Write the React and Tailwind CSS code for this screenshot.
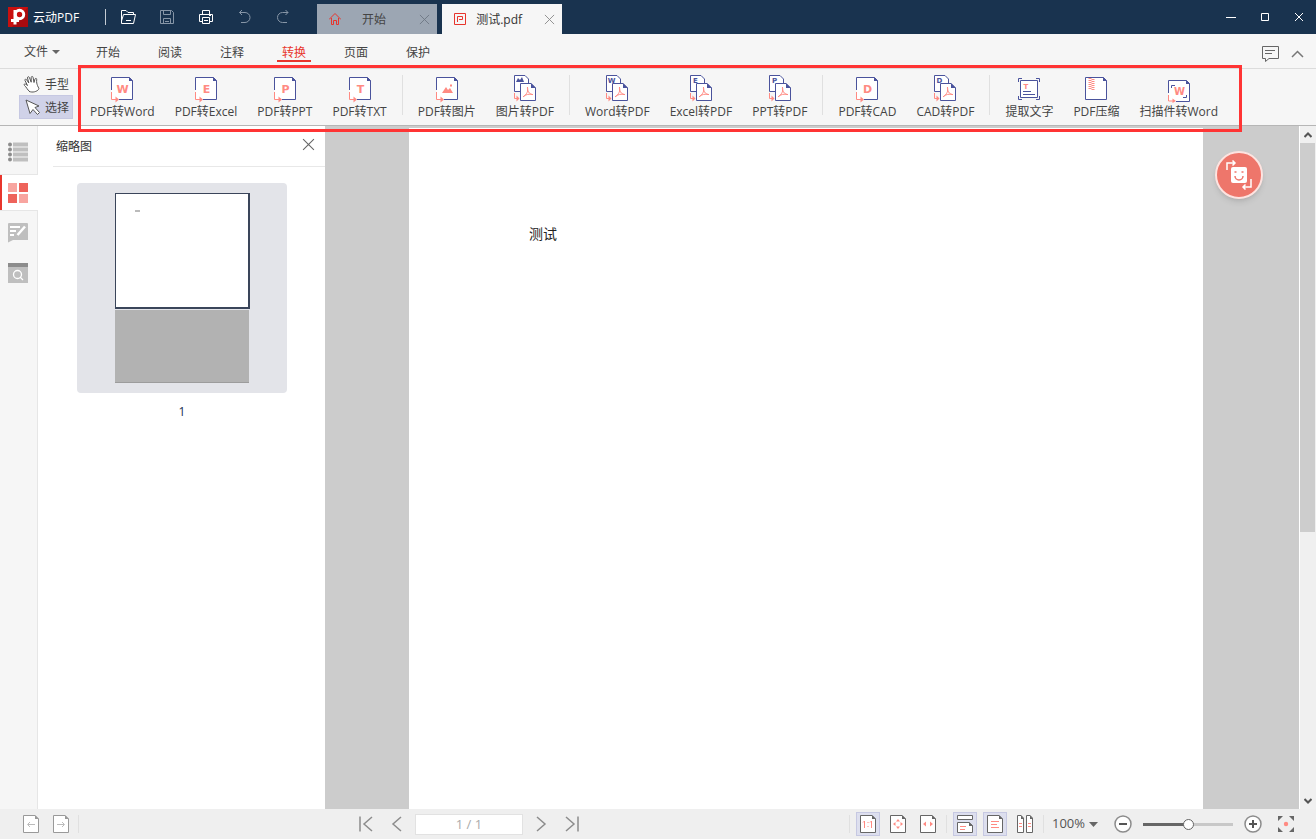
import React, { useState } from "react";

const BLUE = "#4a539c";
const PINK = "#ff8a82";

const MENUS = ["开始", "阅读", "注释", "转换", "页面", "保护"];

const TOOL_GROUPS = [
  [
    { label: "PDF转Word", icon: <ToFormatIcon letter="W" /> },
    { label: "PDF转Excel", icon: <ToFormatIcon letter="E" /> },
    { label: "PDF转PPT", icon: <ToFormatIcon letter="P" /> },
    { label: "PDF转TXT", icon: <ToFormatIcon letter="T" /> },
  ],
  [
    { label: "PDF转图片", icon: <ToFormatIcon picture /> },
    { label: "图片转PDF", icon: <ToPdfIcon picture /> },
  ],
  [
    { label: "Word转PDF", icon: <ToPdfIcon letter="W" /> },
    { label: "Excel转PDF", icon: <ToPdfIcon letter="E" /> },
    { label: "PPT转PDF", icon: <ToPdfIcon letter="P" /> },
  ],
  [
    { label: "PDF转CAD", icon: <ToFormatIcon letter="D" /> },
    { label: "CAD转PDF", icon: <ToPdfIcon letter="D" /> },
  ],
  [
    { label: "提取文字", icon: <ExtractIcon /> },
    { label: "PDF压缩", icon: <CompressIcon /> },
    { label: "扫描件转Word", icon: <ScanIcon /> },
  ],
];

function Letter({ x, y, size, color, children }) {
  return (
    <text x={x} y={y} fontSize={size} fill={color} textAnchor="middle" fontWeight="700" fontFamily="DejaVu Sans, sans-serif">
      {children}
    </text>
  );
}

// source page on top, pink arrow leading out of the lower left corner
function ToFormatIcon({ letter, picture }) {
  return (
    <svg width="24" height="30" viewBox="0 0 24 30" fill="none">
      <path d="M1.5 4.500H19.500L22.500 7.500V26.500H1.500Z" fill="#fff" />
      <path d="M1.500 17V4.500H19.500L22.500 7.500V26.500H9" stroke={BLUE} />
      <path d="M19 4V8H23Z" fill={BLUE} />
      <path d="M1.500 19V26.500H7" stroke={PINK} />
      <path d="M5.500 23.500L9 26.500L5.500 29.500Z" fill={PINK} />
      {letter && <Letter x={12.5} y={20} size={11} color={PINK}>{letter}</Letter>}
      {picture && <path d="M7 20L11 14L13 17L15 15L18 20ZM15 11.500h2v2h-2z" fill={PINK} />}
    </svg>
  );
}

// small source page behind a PDF page
function ToPdfIcon({ letter, picture }) {
  return (
    <svg width="24" height="30" viewBox="0 0 24 30" fill="none">
      <path d="M1.500 18.500V2.500H12L15.500 6V18.500Z" fill="#fff" stroke={BLUE} />
      {letter && <Letter x={6.5} y={9.500} size={7} color={BLUE}>{letter}</Letter>}
      {picture && <path d="M3 9L5 5L7 7L9 4L11 9Z" fill={BLUE} />}
      <path d="M7.500 10.500H18L22.500 15V27.500H7.500Z" fill="#fff" stroke={BLUE} />
      <path d="M18 10V15H23Z" fill={BLUE} />
      <path d="M14.500 14.500C15.500 18 14 21 10.500 23.500M14.500 14.500C14 18 16 21 19.500 21.500M10.500 23.500C12.500 21.500 16 20.500 19.500 21.500" stroke={PINK} strokeLinecap="round" />
      <path d="M1.500 20V25.500H4" stroke={PINK} />
      <path d="M3.500 22.500L6.500 25.500L3.500 28.500Z" fill={PINK} />
    </svg>
  );
}

function ExtractIcon() {
  return (
    <svg width="24" height="30" viewBox="0 0 24 30" fill="none">
      <path d="M3.500 7.500H20.500V24.500H3.500Z" fill="#fff" stroke={BLUE} />
      <path d="M1.500 9V5.500H5M19 5.500H22.500V9M22.500 23V26.500H19M5 26.500H1.500V23" stroke={BLUE} />
      <path d="M6 18.500H14M6 21.500H18" stroke={BLUE} />
      <Letter x={9} y={15.500} size={7} color={PINK}>T</Letter>
    </svg>
  );
}

function CompressIcon() {
  return (
    <svg width="24" height="30" viewBox="0 0 24 30" fill="none">
      <path d="M1.500 4.500H19.500L22.500 7.500V26.500H1.500Z" fill="#fff" stroke={BLUE} />
      <path d="M19 4V8H23Z" fill={BLUE} />
      <path d="M6 5V17" stroke={PINK} strokeWidth="3" strokeDasharray="1 1" />
      <path d="M9 6V17" stroke={PINK} strokeWidth="3" strokeDasharray="1 1" />
    </svg>
  );
}

function ScanIcon() {
  return (
    <svg width="24" height="30" viewBox="0 0 24 30" fill="none">
      <path d="M1.500 7.500H19.500L22.500 10.500V28.500H1.500Z" fill="#fff" />
      <path d="M1.500 20V7.500H19.500L22.500 10.500V28.500H9" stroke={BLUE} />
      <path d="M19 7V11H23Z" fill={BLUE} />
      <path d="M4.500 15V12.500H8M19.500 22V24.500H16" stroke={BLUE} />
      <path d="M1.500 22V28H7" stroke={PINK} />
      <path d="M5.500 25.500L9 28L5.500 30Z" fill={PINK} />
      <Letter x={12.5} y={22} size={10} color={PINK}>W</Letter>
    </svg>
  );
}

function CloseIcon({ size, color }) {
  return (
    <svg width={size} height={size} viewBox="0 0 12 12" fill="none" stroke={color}>
      <path d="M1 1L11 11M11 1L1 11" />
    </svg>
  );
}

function TitleBar() {
  return (
    <header className="flex h-[34px] shrink-0 bg-[#19334f]">
      <div className="flex items-center pl-2 text-white">
        <svg width="20" height="20" viewBox="0 0 20 20">
          <rect width="20" height="20" fill="#c9100f" />
          <path d="M20 0V20H4Z" fill="#a90b0e" />
          <circle cx="11.500" cy="7.500" r="4.200" fill="none" stroke="#fff" strokeWidth="3" />
          <path d="M7 3V17.500M3 13.500H11" stroke="#fff" strokeWidth="3" fill="none" />
        </svg>
        <h1 className="ml-[5px] pt-0.5 text-xs">云动PDF</h1>
        <div className="ml-[26px] h-4 w-px bg-[#c5ccd4]" />
      </div>
      <div className="ml-3.5 flex items-center gap-[23px]">
        <button aria-label="打开">
          <svg width="16" height="16" viewBox="0 0 16 16" fill="none" stroke="#fff">
            <path d="M1.500 14.500V1.500H6L8 3.500H13.500V5.500M1.500 14.500H13.500L15.500 5.500H3.500L1.500 12M6 11.500H11" />
          </svg>
        </button>
        <button aria-label="保存">
          <svg width="16" height="16" viewBox="0 0 16 16" fill="none" stroke="#8796a7">
            <path d="M1.500 1.500H12.500L14.500 3.500V14.500H1.500ZM4.500 1.500V5.500H11.500V1.500M4.500 14.500V9.500H11.500V14.500M6 12.500H10" />
          </svg>
        </button>
        <button aria-label="打印">
          <svg width="16" height="16" viewBox="0 0 16 16" fill="none" stroke="#fff">
            <path d="M4.500 5.500V1.500H11.500V5.500M4.500 12.500H1.500V5.500H14.500V12.500H11.500M4.500 8.500H11.500V14.500H4.500ZM6 11.500H10M11 6.500H13" />
          </svg>
        </button>
        <button aria-label="撤销">
          <svg width="16" height="16" viewBox="0 0 16 16" fill="none" stroke="#8796a7">
            <path d="M5 1L2.500 3.500L5 6M2.500 3.500H8A5 5 0 0 1 8 13.500H4" />
          </svg>
        </button>
        <button aria-label="重做">
          <svg width="16" height="16" viewBox="0 0 16 16" fill="none" stroke="#8796a7">
            <path d="M9.500 1L12 3.500L9.500 6M12 3.500H6.500A5 5 0 0 0 6.500 13.500H11" />
          </svg>
        </button>
      </div>
      <div className="ml-[25px] flex items-end gap-[5px]">
        <div className="flex h-[30px] w-[120px] items-center bg-[#9ca6b3] pr-[7px] pl-3">
          <svg width="12" height="12" viewBox="0 0 12 12" fill="none" stroke="#e8352c">
            <path d="M0 6.500L6 0.500L12 6.500M2.500 5V11.500H4.500V7.500H7.500V11.500H9.500V5" />
          </svg>
          <button className="flex-1 pt-0.5 pr-3 text-xs text-[#444]">开始</button>
          <button aria-label="关闭 开始"><CloseIcon size={11} color="#6f7884" /></button>
        </div>
        <div className="flex h-[30px] w-[120px] items-center bg-[#f6f6f6] pr-[7px] pl-3">
          <svg width="12" height="12" viewBox="0 0 12 12" fill="none" stroke="#e8352c">
            <path d="M0.500 0.500H11.500V11.500H0.500Z" />
            <path d="M3.500 9V3.500H8.500V6.500H5" />
          </svg>
          <button className="flex-1 pt-0.5 pr-3 text-xs text-[#333]">测试.pdf</button>
          <button aria-label="关闭 测试.pdf"><CloseIcon size={11} color="#8a8a8a" /></button>
        </div>
      </div>
      <div className="ml-auto flex items-center gap-[22px] pr-[11px]">
        <button aria-label="最小化">
          <svg width="12" height="12" viewBox="0 0 12 12" stroke="#fff"><path d="M1 6.500H11" /></svg>
        </button>
        <button aria-label="最大化">
          <svg width="12" height="12" viewBox="0 0 12 12" fill="none" stroke="#fff"><path d="M2.500 2.500H9.500V9.500H2.500Z" /></svg>
        </button>
        <button aria-label="关闭">
          <svg width="12" height="12" viewBox="0 0 12 12" stroke="#fff"><path d="M2 2L10 10M10 2L2 10" /></svg>
        </button>
      </div>
    </header>
  );
}

function MenuBar({ active, onSelect }) {
  return (
    <nav className="flex h-[35px] shrink-0 items-center border-b border-[#dcdcdc] bg-[#f6f6f6] text-xs text-[#444]">
      <button className="flex w-[77px] items-center gap-1 pt-0.5 pl-6">
        文件
        <svg width="8" height="4" viewBox="0 0 8 4" fill="#666"><path d="M0 0H8L4 4Z" /></svg>
      </button>
      {MENUS.map((m) => (
        <button key={m} onClick={() => onSelect(m)} className="flex h-full w-[62px] justify-center pt-[7px]">
          <span className={m === active
            ? "h-[21px] border-b-2 border-[#e8352c] px-[5px] leading-6 text-[#e8352c]"
            : "h-[21px] px-[5px] leading-6"}>{m}</span>
        </button>
      ))}
      <div className="ml-auto flex items-center gap-3 pt-1.5 pr-3">
        <button aria-label="反馈">
          <svg width="17" height="16" viewBox="0 0 17 16" fill="none" stroke="#666">
            <path d="M0.500 0.500H16.500V12.500H7L3.500 15.500V12.500H0.500ZM3 4.500H13M3 7.500H10" />
          </svg>
        </button>
        <button aria-label="收起">
          <svg width="13" height="8" viewBox="0 0 13 8" fill="none" stroke="#777"><path d="M1 7L6.500 1.500L12 7" strokeWidth="1.500" /></svg>
        </button>
      </div>
    </nav>
  );
}

function Toolbar() {
  return (
    <div className="flex h-[57px] shrink-0 border-b border-[#b6b6b6] bg-[#f6f6f6] text-xs text-[#444]">
      <div className="flex w-[78px] flex-col pt-[3px] pl-[19px]">
        <button className="flex h-[23px] w-[54px] items-center gap-1 pl-1">
          <svg width="18" height="18" viewBox="0 0 18 18" fill="#fff" stroke="#555" strokeLinejoin="round" strokeLinecap="round">
            <path d="M6.500 16.500C4 14.500 3.500 12 1.500 10.500C0.500 9.500 1.500 8.500 2.800 9.200L4.500 10.500L2 5.500C1.600 4.200 3 3.600 3.700 4.800L5.800 8L4.500 3C4.300 1.600 5.900 1.200 6.400 2.500L8.200 7.200L8.200 2.500C8.300 1.100 9.900 1.100 10.100 2.500L11 7.500L12 4C12.500 2.900 13.900 3.300 13.700 4.500C13.300 7.500 14 9 14.500 10.500C15.300 13 16.500 13 15.500 14.500C14 16.500 9.500 18 6.500 16.500Z" />
          </svg>
          <span className="pt-0.5">手型</span>
        </button>
        <button className="flex h-6 w-[54px] items-center gap-1 border border-[#c6c8e2] bg-[#d0d2e8] pl-1">
          <svg width="17" height="18" viewBox="0 0 17 18" fill="#fff" stroke="#555" strokeLinejoin="round">
            <path d="M2 2L6 15.500L9 11.500L13.500 16.500L15.500 14.500L11 9.500L15 8Z" />
          </svg>
          <span className="pt-0.5">选择</span>
        </button>
      </div>
      <div className="relative flex items-center pr-6 pl-3">
        {TOOL_GROUPS.map((group, i) => (
          <React.Fragment key={group[0].label}>
            {i > 0 && <div className="mx-[15px] mb-1 h-10 w-px bg-[#e0e0e0]" />}
            <div className="flex gap-5">
              {group.map((t) => (
                <button key={t.label} className="flex flex-col items-center whitespace-nowrap leading-[18px]">
                  {t.icon}
                  <span>{t.label}</span>
                </button>
              ))}
            </div>
          </React.Fragment>
        ))}
        <div className="pointer-events-none absolute inset-x-0 -top-1 -bottom-[7px] z-10 border-3 border-[#ff3434]" />
      </div>
    </div>
  );
}

function SideTabs() {
  return (
    <nav className="flex w-[38px] shrink-0 flex-col bg-[#f6f6f6]">
      <button aria-label="目录" className="flex h-[49px] items-center border-r border-b border-[#e6e6e6] pt-1 pl-2">
        <svg width="20" height="20" viewBox="0 0 20 20">
          <path d="M5 0.500H20V4.500H5ZM5 5.500H20V9.500H5ZM5 10.500H20V14.500H5ZM5 15.500H20V19.500H5Z" fill="#bfbfbf" />
          <g fill="#8c8c8c"><circle cx="2" cy="2.500" r="2" /><circle cx="2" cy="7.500" r="2" /><circle cx="2" cy="12.500" r="2" /><circle cx="2" cy="17.500" r="2" /></g>
        </svg>
      </button>
      <button aria-label="缩略图" className="flex h-[35px] items-center border-l-2 border-[#e8352c] bg-white pl-1.5">
        <svg width="20" height="20" viewBox="0 0 20 20">
          <path d="M0 0H9V9H0ZM11 11H20V20H11Z" fill="#f8a5a0" />
          <path d="M11 0H20V9H11ZM0 11H9V20H0Z" fill="#ee635b" />
        </svg>
      </button>
      <div className="flex flex-1 flex-col gap-5 border-t border-r border-[#e6e6e6] pt-3 pl-2">
        <button aria-label="注释列表" className="h-5 w-5">
          <svg width="20" height="20" viewBox="0 0 20 20">
            <path d="M1 0H19Q20 0 20 1V17H5L0 19.500V1Q0 0 1 0Z" fill="#bfbfbf" />
            <path d="M2 4H12M2 8H8M2 12H6" stroke="#fff" strokeWidth="2" />
            <path d="M17 3.500L9.500 12" stroke="#fff" strokeWidth="2.500" />
          </svg>
        </button>
        <button aria-label="搜索" className="h-5 w-5">
          <svg width="20" height="20" viewBox="0 0 20 20">
            <path d="M0 0H20V20H0Z" fill="#bfbfbf" />
            <path d="M0 0H20V4H0Z" fill="#8c8c8c" />
            <circle cx="9.500" cy="11.500" r="4" fill="none" stroke="#fff" strokeWidth="1.300" />
            <path d="M12 14L15 17" stroke="#fff" strokeWidth="1.300" />
          </svg>
        </button>
      </div>
    </nav>
  );
}

function ThumbPanel() {
  return (
    <aside className="w-[287px] shrink-0 bg-white">
      <div className="ml-[15px] flex h-[41px] items-center justify-between border-b border-[#e8e8e8] pr-2.5 pl-[3px] text-xs text-[#333]">
        <h2 className="pt-0.5">缩略图</h2>
        <button aria-label="关闭缩略图" className="pb-1"><CloseIcon size={13} color="#666" /></button>
      </div>
      <button className="mx-auto mt-4 block pl-px text-xs text-[#19334f]">
        <div className="flex h-[210px] w-[210px] flex-col items-center gap-px rounded-sm bg-[#e3e4e9] pt-2.5">
          <div className="h-[116px] w-[135px] border-2 border-t border-l border-[#3a455a] bg-white pt-4 pl-[19px]">
            <div className="h-0.5 w-[5px] bg-[#bbb]" />
          </div>
          <div className="h-[73px] w-[134px] border-b border-[#9c9c9c] bg-[#b2b2b2]" />
        </div>
        <div className="pt-[11px] leading-4">1</div>
      </button>
    </aside>
  );
}

function Viewer() {
  return (
    <main className="relative flex min-w-0 flex-1 bg-[#ccc] pt-0.5 pr-24 pl-[84px]">
      <article className="flex-1 bg-white pt-[97px] pl-[120px] font-['Liberation_Serif','Noto_Sans_CJK_SC',serif] text-sm leading-5 text-[#222]">测试</article>
      <button aria-label="转换" className="absolute top-[25px] right-9 flex h-12 w-12 items-center justify-center rounded-full border-2 border-[#fde3e0] bg-[#ee766b] shadow-md">
        <svg width="28" height="30" viewBox="0 0 28 30" fill="none" stroke="#fff" strokeWidth="1.500">
          <path d="M2 10V3H9M7.500 0.500L10 3L7.500 5.500M26 19V27H19M20.500 24.500L18 27L20.500 29.500" />
          <rect x="6" y="7" width="16" height="16" rx="2" fill="#fff" stroke="none" />
          <path d="M10 16A4 4 0 0 0 18 16" stroke="#ee766b" />
          <path d="M9.500 12H11.500M16.500 12H18.500" stroke="#ee766b" />
        </svg>
      </button>
    </main>
  );
}

function ScrollBar() {
  return (
    <div className="flex w-[17px] shrink-0 flex-col items-center border-l border-white bg-[#f0f0f0]">
      <button aria-label="向上滚动" className="flex h-[17px] w-full shrink-0 items-center justify-center">
        <svg width="8" height="6" viewBox="0 0 8 6" fill="none" stroke="#555" strokeWidth="2"><path d="M0.500 5L4 1.500L7.500 5" /></svg>
      </button>
      <div className="w-full flex-1 pr-px">
        <div className="h-3/5 bg-[#cdcdcd]" />
      </div>
      <button aria-label="向下滚动" className="flex h-[17px] w-full shrink-0 items-center justify-center">
        <svg width="8" height="6" viewBox="0 0 8 6" fill="none" stroke="#555" strokeWidth="2"><path d="M0.500 1L4 4.500L7.500 1" /></svg>
      </button>
    </div>
  );
}

function PageIcon({ color = "#666", children }) {
  return (
    <svg width="16" height="18" viewBox="0 0 16 18" fill="none">
      <path d="M0.500 0.500H12L15.500 4V17.500H0.500Z" fill="#fff" stroke={color} />
      <path d="M12 0V4H16Z" fill={color} />
      {children}
    </svg>
  );
}

function ViewButton({ label, active, children }) {
  return (
    <button aria-label={label} aria-pressed={!!active}
      className={active
        ? "flex h-6 w-6 items-center justify-center border border-[#c6c8e2] bg-[#dddfee]"
        : "flex h-6 w-6 items-center justify-center"}>
      {children}
    </button>
  );
}

function NavIcon({ d }) {
  return (
    <svg width="16" height="16" viewBox="0 0 16 16" fill="none" stroke="#8c8c8c" strokeWidth="1.500"><path d={d} /></svg>
  );
}

function StatusBar() {
  const [page, setPage] = useState("1 / 1");
  const [zoom, setZoom] = useState(50);

  return (
    <footer className="flex h-[30px] shrink-0 items-center bg-[#efefef] text-[13px] text-[#666]">
      <div className="flex items-center gap-3.5 pl-[23px]">
        <button aria-label="上一视图">
          <PageIcon color="#999"><path d="M12 9.500H5M7 7L4.500 9.500L7 12" stroke="#bbb" /></PageIcon>
        </button>
        <button aria-label="下一视图">
          <PageIcon color="#999"><path d="M4 9.500H11M9 7L11.500 9.500L9 12" stroke="#bbb" /></PageIcon>
        </button>
      </div>
      <div className="ml-[9px] h-[18px] w-px bg-[#e0e0e0]" />
      <div className="ml-[279px] flex items-center gap-2.5">
        <button aria-label="第一页" className="mr-[5px]"><NavIcon d="M2 0.500V15.500M14 1L6 8L14 15" /></button>
        <button aria-label="上一页"><NavIcon d="M12 1L4 8L12 15" /></button>
        <input aria-label="页码" value={page} onChange={(e) => setPage(e.target.value)}
          className="h-[21px] w-[108px] border border-[#e2e2e2] bg-white text-center text-[13px] text-[#aaa] outline-none" />
        <button aria-label="下一页"><NavIcon d="M4 1L12 8L4 15" /></button>
        <button aria-label="最后一页" className="ml-[5px]"><NavIcon d="M14 0.500V15.500M2 1L10 8L2 15" /></button>
      </div>
      <div className="ml-auto flex items-center gap-1.5">
        <div className="h-[18px] w-px bg-[#e0e0e0]" />
        <ViewButton label="实际大小" active>
          <PageIcon><path d="M4.500 6V13M11.500 6V13M3 7.500L4.500 6M10 7.500L11.500 6M8 7V8M8 11V12" stroke={PINK} /></PageIcon>
        </ViewButton>
        <ViewButton label="适合页面">
          <PageIcon><path d="M8 4L10 6.500H6ZM8 14L10 11.500H6ZM3 9L5.500 7V11ZM13 9L10.500 7V11Z" fill={PINK} /></PageIcon>
        </ViewButton>
        <ViewButton label="适合宽度">
          <PageIcon><path d="M3 9L6 6.500V11.500ZM13 9L10 6.500V11.500Z" fill={PINK} /></PageIcon>
        </ViewButton>
        <div className="h-[18px] w-px bg-[#e0e0e0]" />
        <ViewButton label="连续" active>
          <svg width="16" height="18" viewBox="0 0 16 18" fill="#fff" stroke="#666">
            <path d="M0.500 0.500H15.500V4.500H0.500ZM0.500 17.500V7.500H12L15.500 10.500V17.500Z" />
            <path d="M12 7V11H16Z" fill="#666" stroke="none" />
            <path d="M3 11.500H9M3 14.500H8" stroke={PINK} />
          </svg>
        </ViewButton>
        <ViewButton label="单页" active>
          <PageIcon><path d="M4 6.500H12M4 9.500H10M4 12.500H12" stroke={PINK} /></PageIcon>
        </ViewButton>
        <ViewButton label="双页">
          <svg width="16" height="18" viewBox="0 0 16 18" fill="#fff" stroke="#666">
            <path d="M0.500 0.500H4L6.500 3V17.500H0.500ZM9.500 0.500H13L15.500 3V17.500H9.500Z" />
            <path d="M4 0V4H7ZM13 0V4H16Z" fill="#666" stroke="none" />
            <path d="M2 8.500H5M2 11.500H5M11 8.500H14M11 11.500H14" stroke={PINK} />
          </svg>
        </ViewButton>
        <div className="h-[18px] w-px bg-[#e0e0e0]" />
      </div>
      <button className="ml-2 flex items-center gap-1 text-[#555]">
        100%
        <svg width="9" height="5" viewBox="0 0 9 5" fill="#666"><path d="M0 0H9L4.500 5Z" /></svg>
      </button>
      <div className="flex items-center gap-[11px] pr-[22px] pl-4">
        <button aria-label="缩小">
          <svg width="18" height="18" viewBox="0 0 18 18" fill="#fff" stroke="#8c8c8c" strokeWidth="1.500">
            <circle cx="9" cy="9" r="8" /><path d="M5 9H13" stroke="#555" strokeWidth="2" />
          </svg>
        </button>
        <input type="range" aria-label="缩放" value={zoom} onChange={(e) => setZoom(e.target.value)}
          style={{ background: `linear-gradient(to right, #666 ${zoom}%, #c8c8c8 ${zoom}%)` }}
          className="h-[3px] w-[90px] appearance-none [&::-webkit-slider-thumb]:h-[11px] [&::-webkit-slider-thumb]:w-[11px] [&::-webkit-slider-thumb]:appearance-none [&::-webkit-slider-thumb]:rounded-full [&::-webkit-slider-thumb]:border [&::-webkit-slider-thumb]:border-[#666] [&::-webkit-slider-thumb]:bg-white" />
        <button aria-label="放大">
          <svg width="18" height="18" viewBox="0 0 18 18" fill="#fff" stroke="#8c8c8c" strokeWidth="1.500">
            <circle cx="9" cy="9" r="8" /><path d="M5 9H13M9 5V13" stroke="#555" strokeWidth="2" />
          </svg>
        </button>
        <button aria-label="全屏" className="ml-[5px]">
          <svg width="16" height="16" viewBox="0 0 16 16" fill="#666">
            <path d="M0 0H5L0 5ZM16 0V5L11 0ZM16 16H11L16 11ZM0 16V11L5 16Z" />
            <circle cx="8" cy="8" r="2.200" fill={PINK} />
          </svg>
        </button>
      </div>
    </footer>
  );
}

export default function App() {
  const [menu, setMenu] = useState("转换");

  return (
    <div className="flex h-screen flex-col overflow-hidden bg-[#f6f6f6] font-['Open_Sans','Noto_Sans_CJK_SC',sans-serif]">
      <TitleBar />
      <MenuBar active={menu} onSelect={setMenu} />
      <Toolbar />
      <div className="flex min-h-0 flex-1">
        <SideTabs />
        <ThumbPanel />
        <Viewer />
        <ScrollBar />
      </div>
      <StatusBar />
    </div>
  );
}
